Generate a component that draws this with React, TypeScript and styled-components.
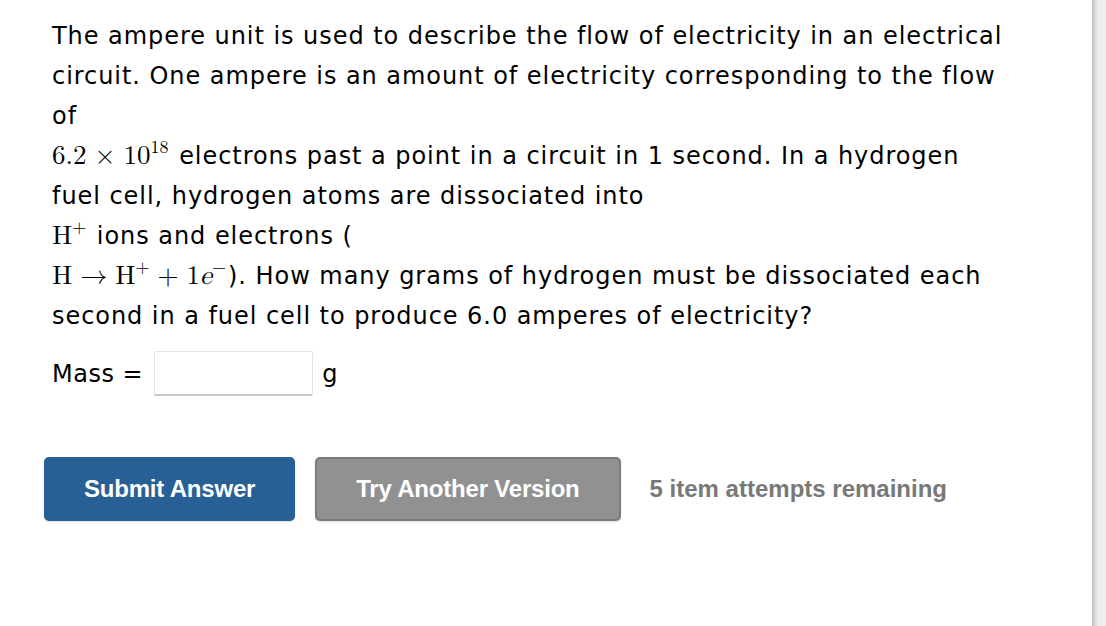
import styled, { createGlobalStyle } from "styled-components";

const GlobalStyle = createGlobalStyle`
	html, body {
		margin: 0;
		padding: 0;
		background: #ffffff;
	}
`;

const Page = styled.div`
	display: flex;
	width: 1106px;
	height: 626px;
	overflow: hidden;
`;

const Content = styled.main`
	flex: 1;
	padding: 16px 0 0 52px;
	font-family: "DejaVu Sans", Verdana, sans-serif;
	color: #000000;
`;

const ScrollTrack = styled.div`
	width: 14px;
	height: 100%;
	background: linear-gradient(to right, #b9b9b9 0px, #d9d9d9 3px, #ececec 6px, #eeeeee 14px);
`;

const Question = styled.p`
	margin: 0;
	font-size: 24px;
	line-height: 40px;
	letter-spacing: 0.95px;
	white-space: nowrap;
`;

const M = styled.span`
	font-family: "Latin Modern Math", "Liberation Serif", "Times New Roman", serif;
	font-size: 27px;
	line-height: 1;
	letter-spacing: 0;
	margin-right: 2px;

	sup {
		font-size: 18px;
		line-height: 0;
		vertical-align: 11px;
	}
`;

const Op = styled.span`
	margin: 0 8px;
`;

const Italic = styled.i``;

const AnswerRow = styled.div`
	display: flex;
	align-items: center;
	gap: 14px;
	margin-top: 15px;
	font-size: 24px;
	letter-spacing: 0.5px;
`;

const AnswerInput = styled.input`
	box-sizing: border-box;
	width: 159px;
	height: 45px;
	margin: 0 -5px 0 -3px;
	border: 1px solid #e3e3e3;
	border-bottom: 2px solid #c8c8c8;
	border-radius: 2px;
	background: #ffffff;
	font-size: 20px;
`;

const Actions = styled.div`
	display: flex;
	align-items: center;
	gap: 20px;
	margin: 61px 0 0 -8px;
	font-family: "Liberation Sans", Arial, sans-serif;
`;

const Button = styled.button<{ $variant: "primary" | "secondary" }>`
	box-sizing: border-box;
	height: 64px;
	padding: 0 ${(p) => (p.$variant === "primary" ? "38px" : "39px")};
	border-radius: 5px;
	border: 2px solid ${(p) => (p.$variant === "primary" ? "#285f94" : "#7c7c7c")};
	background: ${(p) => (p.$variant === "primary" ? "#285f94" : "#919191")};
	color: #ffffff;
	font-family: "Liberation Sans", Arial, sans-serif;
	font-weight: bold;
	font-size: 24px;
	letter-spacing: -0.2px;
	box-shadow: 0 1px 2px rgba(0, 0, 0, 0.15);
	cursor: pointer;
`;

const Attempts = styled.span`
	margin-left: 9px;
	color: #787878;
	font-weight: bold;
	font-size: 24px;
	letter-spacing: 0;
`;

const App = () => {
	return (
		<Page>
			<GlobalStyle />
			<Content>
				<Question>
					The ampere unit is used to describe the flow of electricity in an electrical
					<br />
					circuit. One ampere is an amount of electricity corresponding to the flow
					<br />
					of
					<br />
					<M>
						6.2<Op>×</Op>10<sup>18</sup>
					</M>{" "}
					electrons past a point in a circuit in 1 second. In a hydrogen
					<br />
					fuel cell, hydrogen atoms are dissociated into
					<br />
					<M>
						H<sup>+</sup>
					</M>{" "}
					ions and electrons (
					<br />
					<M>
						H<Op>→</Op>H<sup>+</sup>
						<Op>+</Op>1<Italic>e</Italic>
						<sup>−</sup>
					</M>
					). How many grams of hydrogen must be dissociated each
					<br />
					second in a fuel cell to produce 6.0 amperes of electricity?
				</Question>
				<AnswerRow>
					<span>Mass =</span>
					<AnswerInput type="text" />
					<span>g</span>
				</AnswerRow>
				<Actions>
					<Button $variant="primary">Submit Answer</Button>
					<Button $variant="secondary">Try Another Version</Button>
					<Attempts>5 item attempts remaining</Attempts>
				</Actions>
			</Content>
			<ScrollTrack />
		</Page>
	);
};

export default App;
